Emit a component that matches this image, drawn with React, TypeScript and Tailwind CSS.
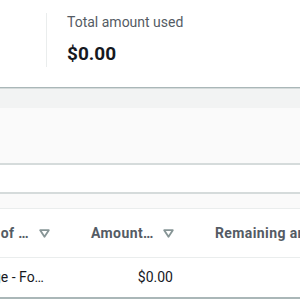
import React from "react";

function SortIcon() {
  return (
    <svg width="11" height="9" viewBox="0 0 11 9" className="shrink-0">
      <path d="M1.2 1.2 H9.8 L5.5 7.8 Z" fill="none" stroke="#879596" strokeWidth="1.8" strokeLinejoin="round" />
    </svg>
  );
}

export default function App() {
  return (
    <div className="w-[300px] h-[300px] overflow-hidden bg-white font-[Roboto,Arial,sans-serif]">
      {/* Summary */}
      <div className="flex h-[87px]">
        <div className="w-[47px] shrink-0 flex justify-end">
          <div className="w-px h-[54px] mt-[13px] bg-[#eaeded]" />
        </div>
        <div className="pl-[20px] pt-[12px]">
          <div className="text-[14px] leading-[20px] text-[#545b64] whitespace-nowrap">Total amount used</div>
          <div className="mt-[10px] text-[19px] leading-[24px] font-bold text-[#16191f]">$0.00</div>
        </div>
      </div>

      {/* Container header */}
      <div className="h-px bg-[#aab7b8]" />
      <div className="h-px bg-[#d5dbdb]" />
      <div className="h-[19px] bg-[#f2f3f3]" />
      <div className="h-[55px] bg-[#fafafa]" />
      <div className="h-[2px] bg-[#d5dbdb]" />
      <div className="h-[27px] bg-white" />
      <div className="h-[2px] bg-[#d5dbdb]" />
      <div className="h-[14px] bg-[#fafafa]" />
      <div className="h-px bg-[#eaeded]" />

      {/* Table header */}
      <div className="flex h-[48px] items-center text-[14px] font-bold tracking-[0.4px] text-[#545b64] whitespace-nowrap">
        <div className="w-[70px] shrink-0 flex items-center justify-end pr-[20px] h-full">
          <span>Type of …</span>
          <span className="ml-[10px]"><SortIcon /></span>
        </div>
        <div className="w-px h-[24px] bg-[#eaeded]" />
        <div className="w-[123px] shrink-0 flex items-center justify-between pl-[21px] pr-[19px]">
          <span>Amount…</span>
          <SortIcon />
        </div>
        <div className="w-px h-[24px] bg-[#eaeded]" />
        <div className="pl-[22px] flex items-center">
          <span>Remaining amount</span>
        </div>
      </div>
      <div className="h-px bg-[#eaeded]" />

      {/* Row */}
      <div className="flex h-[39px] items-center text-[14px] text-[#16191f] whitespace-nowrap">
        <div className="w-[70px] shrink-0 flex justify-end pr-[26px]">
          <span>Free Usage - Fo…</span>
        </div>
        <div className="w-[124px] shrink-0 flex justify-end pr-[21px]">
          <span>$0.00</span>
        </div>
        <div className="flex-1" />
      </div>
      <div className="h-[2px] bg-[#aab7b8]" />
    </div>
  );
}
